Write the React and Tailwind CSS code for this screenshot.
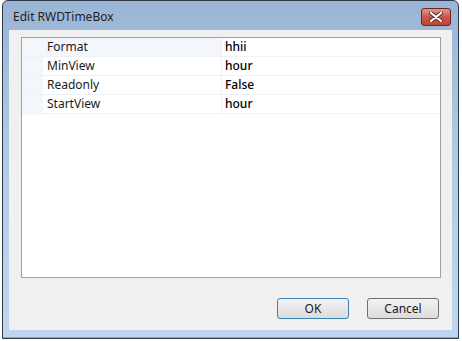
import React from 'react';

const props = [
  { name: 'Format', value: 'hhii' },
  { name: 'MinView', value: 'hour' },
  { name: 'Readonly', value: 'False' },
  { name: 'StartView', value: 'hour' },
];

const CloseIcon = () => (
  <svg width="14" height="10" viewBox="0 0 14 10">
    <path d="M2 1 L12 9 M12 1 L2 9" stroke="#5a2a2a" strokeWidth="4" strokeLinecap="round" />
    <path d="M2 1 L12 9 M12 1 L2 9" stroke="#ffffff" strokeWidth="2.2" strokeLinecap="round" />
  </svg>
);

const App = () => {
  return (
    <div className="w-[462px] h-[341px] bg-white overflow-hidden" style={{ fontFamily: '"Noto Sans", "Open Sans", sans-serif' }}>
      <div className="ml-[2px] w-[457px] h-[339px] border border-[#2f3b48] rounded-t-[6px] bg-gradient-to-b from-[#9ab5d5] via-[#b3cbe6] to-[#bfd6ee] flex flex-col">
        {/* barra de titulo */}
        <div className="h-[29px] flex items-center pl-[10px] pr-[7px] shrink-0">
          <span className="text-[12px] text-[#1e1e1e] pt-[2px]">Edit RWDTimeBox</span>
          <button className="ml-auto mt-[2px] w-[30px] h-[18px] rounded-[3px] border border-[#6b2620] bg-gradient-to-b from-[#e09a8a] via-[#c8584a] to-[#bf4634] flex items-center justify-center">
            <CloseIcon />
          </button>
        </div>

        {/* contenido */}
        <div className="flex-1 px-[6px] pb-[7px] flex">
          <div className="flex-1 bg-[#f0f0f0] flex flex-col pt-[7px] pl-[12px] pr-[11px]">
            <div className="h-[241px] bg-white border border-[#a0a0a0] text-[12px] text-[#1a1a1a]">
              {props.map((p, i) => (
                <div key={p.name} className="flex h-[19px] border-b border-[#eef2f8]">
                  <div className="w-[21px] bg-[#f3f6fb] shrink-0" />
                  <div className={`w-[179px] pl-[4px] flex items-center border-r border-[#eef2f8] ${i === 0 ? 'bg-[#f3f6fb]' : ''}`}>{p.name}</div>
                  <div className="flex-1 pl-[3px] flex items-center font-medium text-black">{p.value}</div>
                </div>
              ))}
            </div>

            <div className="flex justify-end gap-[18px] mt-[20px] pr-[2px]">
              <button className="w-[72px] h-[21px] rounded-[3px] border border-[#3c7fb1] bg-gradient-to-b from-[#f2f2f2] to-[#dcdcdc] text-[12px] text-[#1a1a1a] flex items-center justify-center">OK</button>
              <button className="w-[72px] h-[21px] rounded-[3px] border border-[#707070] bg-gradient-to-b from-[#f2f2f2] to-[#dcdcdc] text-[12px] text-[#1a1a1a] flex items-center justify-center">Cancel</button>
            </div>
          </div>
        </div>
        <div className="h-[1px] bg-[#35c8e0] shrink-0" />
      </div>
    </div>
  );
};

export default App;
